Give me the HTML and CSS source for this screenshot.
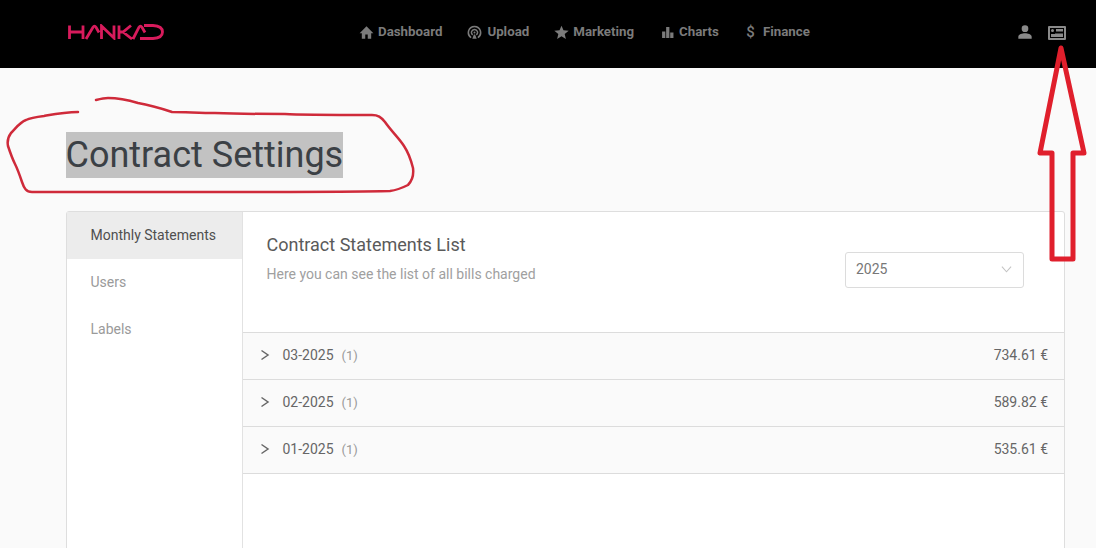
FILE: index.html
```html
<!DOCTYPE html>
<html lang="en">
<head>
<meta charset="utf-8">
<title>Contract Settings</title>
<link rel="stylesheet" href="styles.css">
</head>
<body>
<header class="topbar">
  <svg class="logo" viewBox="0 0 96 16" width="96" height="16" aria-label="HANKAD">
    <path d="M1.500 1.500V15M1.500 8H15M15 1.500V15M18 15 25 3.200Q26.500 1 28 3.200L31 8.500M33.500 15V2L46 14V1.500M51 1.500V15M51 8H55L63 1.500M55 8 64 15M65 15 71 3.200Q72.500 1 74 3.200L77 8.500M76 1.500H85Q94.500 2 94.500 8T85 14.500H72" />
  </svg>
  <nav class="nav">
    <a class="nav-item"><svg class="nav-icon" viewBox="0 0 24 24"><path d="M10 22v-7h4v7h5.500v-9H23L12 2 1 13h3.500v9z"/></svg>Dashboard</a>
    <a class="nav-item upload"><svg class="nav-icon" viewBox="0 0 24 24"><path d="M12 1a11 11 0 0 0-6 20.200l1.300-2.200a8.500 8.500 0 1 1 9.400 0l1.300 2.200A11 11 0 0 0 12 1zm0 5a6 6 0 0 0-3.500 10.900l1.300-2.200a3.500 3.500 0 1 1 4.400 0l1.300 2.200A6 6 0 0 0 12 6zm0 4.500a1.600 1.600 0 1 0 0 3.200 1.600 1.600 0 0 0 0-3.200zM11 15h2l2.500 7h-7z"/></svg>Upload</a>
    <a class="nav-item"><svg class="nav-icon" viewBox="0 0 24 24"><path d="m12 18 7 4.300-1.900-8L23.500 9l-8.300-.7L12 1 8.800 8.300.5 9l6.400 5.300-1.900 8z"/></svg>Marketing</a>
    <a class="nav-item charts"><svg class="nav-icon chart-icon" viewBox="0 0 24 24"><path d="M2 10h6v12H2zM9.500 2h6v20h-6zM17 12h6v10h-6z"/></svg>Charts</a>
    <a class="nav-item finance"><span class="dollar">$</span>Finance</a>
  </nav>
  <div class="top-actions">
    <svg class="action-icon" viewBox="0 0 24 24"><path d="M12 12a5 5 0 1 0 0-10 5 5 0 0 0 0 10zm0 2c-3.800 0-10 1.700-10 5v3h20v-3c0-3.300-6.200-5-10-5z"/></svg>
    <svg class="action-icon wide" viewBox="0 0 18 14"><path fill-rule="evenodd" d="M1 0h16a1 1 0 0 1 1 1v12a1 1 0 0 1-1 1H1a1 1 0 0 1-1-1V1a1 1 0 0 1 1-1zm1 2v10h14V2zm2.500 1a1.500 1.500 0 1 1 0 3 1.500 1.500 0 0 1 0-3zM3 11V8h4v-.5h8V11zm5-8h7v2.500H8z"/></svg>
  </div>
</header>

<main class="page">
  <h1 class="title"><span class="title-text">Contract Settings</span></h1>
  <section class="card">
    <aside class="side">
      <a class="side-item active">Monthly Statements</a>
      <a class="side-item">Users</a>
      <a class="side-item">Labels</a>
    </aside>
    <div class="content">
      <div class="content-head">
        <div>
          <h2 class="content-title">Contract Statements List</h2>
          <p class="content-sub">Here you can see the list of all bills charged</p>
        </div>
        <div class="select">
          <span>2025</span>
          <svg class="select-arrow" viewBox="0 0 12 8"><path d="M1 1.500 6 7l5-5.500"/></svg>
        </div>
      </div>
      <div class="rows">
        <div class="row">
          <svg class="chev" viewBox="0 0 10 12"><path d="M1.500 1.500 8 6l-6.500 4.500"/></svg>
          <span class="month">03-2025</span><span class="count">(1)</span><span class="amount">734.61 €</span>
        </div>
        <div class="row">
          <svg class="chev" viewBox="0 0 10 12"><path d="M1.500 1.500 8 6l-6.500 4.500"/></svg>
          <span class="month">02-2025</span><span class="count">(1)</span><span class="amount">589.82 €</span>
        </div>
        <div class="row">
          <svg class="chev" viewBox="0 0 10 12"><path d="M1.500 1.500 8 6l-6.500 4.500"/></svg>
          <span class="month">01-2025</span><span class="count">(1)</span><span class="amount">535.61 €</span>
        </div>
      </div>
    </div>
  </section>
</main>

<svg class="marks" viewBox="0 0 1096 548" width="1096" height="548">
  <path class="mark-thin" d="M78 112C65 112 55 114 44 116C36 117 30 118 26 120C20 122 16 128 11 133C8 137 7 141 8 146C10 152 12 158 15 164C18 170 20 176 22 182C24 188 26 192 32 192C60 192 120 192 200 192C280 192 350 192 390 191C398 190 402 188 408 185C412 181 414 176 413 168C411 160 408 152 404 146C399 138 392 132 385 122C381 117 378 115 372 115C340 115 300 115 285 114C265 114 240 114 215 113C200 113 185 112 172 112C160 108 150 105 138 103C128 100 118 98 108 98C104 98 100 99 96 100"/>
  <path class="mark-thick" d="M1061 48 1040 153H1052V259H1073V153H1084Z"/>
</svg>
</body>
</html>
```
FILE: styles.css
```css
* { box-sizing: border-box; }
html, body { margin: 0; padding: 0; }
body {
  position: relative;
  width: 1096px;
  height: 548px;
  overflow: hidden;
  background: #fafafa;
  font-family: Roboto, "Liberation Sans", sans-serif;
  color: #555;
}
.topbar {
  height: 68px;
  background: #000;
  display: flex;
  align-items: center;
  padding: 0 30px 4px 68px;
  position: relative;
}
.logo { fill: none; stroke: #d81b5c; stroke-width: 2.800; flex: none; }
.nav {
  position: absolute;
  left: 359px;
  top: 24px;
  display: flex;
  gap: 25px;
  align-items: center;
}
.nav-item {
  display: flex;
  align-items: center;
  gap: 4px;
  font-size: 13.300px;
  font-weight: 700;
  line-height: 16px;
  color: #7b7b7b;
  white-space: nowrap;
}
.upload { gap: 5px; }
.charts { margin-left: 2px; gap: 5px; }
.finance { margin-left: 2px; }
.nav-icon { width: 15px; height: 15px; fill: #7b7b7b; flex: none; }
.chart-icon { width: 13px; height: 13px; }
.dollar { width: 9px; font-size: 15px; font-weight: 500; margin-right: 4px; text-align: center; }
.top-actions { margin-left: auto; display: flex; align-items: center; gap: 15px; }
.action-icon { width: 16px; height: 16px; fill: #8a8a8a; }
.action-icon.wide { width: 18px; height: 14px; margin-top: 1px; }

.page { padding: 0 31px 0 65.500px; }
.title { margin: 0; padding-top: 64px; height: 143px; font-weight: 400; font-size: 36px; line-height: 46px; color: #3b4045; }
.title-text { display: inline-block; background: #c2c2c2; height: 46px; }

.card {
  display: flex;
  height: 400px;
  background: #fff;
  border: 1px solid #dedede;
  border-radius: 3px 3px 0 0;
}
.side {
  width: 176px;
  flex: none;
  border-right: 1px solid #e2e2e2;
  display: flex;
  flex-direction: column;
}
.side-item {
  height: 47px;
  padding: 0 24px 2px;
  display: flex;
  align-items: center;
  font-size: 14px;
  color: #9a9a9a;
}
.side-item.active { background: #ececec; color: #4f4f4f; }
.content { flex: 1; min-width: 0; }
.content-head {
  height: 120px;
  padding: 22px 40px 0 24px;
  display: flex;
  justify-content: space-between;
  align-items: flex-start;
}
.content-title { margin: 0; font-size: 18px; font-weight: 400; line-height: 21px; color: #5a5a5a; }
.content-sub { margin: 11px 0 0; font-size: 14px; line-height: 16px; color: #a0a0a0; }
.select {
  width: 179px;
  height: 36px;
  margin-top: 18px;
  padding: 0 11px 2px 10px;
  border: 1px solid #dcdcdc;
  border-radius: 3px;
  display: flex;
  align-items: center;
  justify-content: space-between;
  font-size: 14px;
  color: #777;
}
.select-arrow { width: 11px; height: 8px; fill: none; stroke: #c4c4c4; stroke-width: 1.200; }
.rows { border-top: 1px solid #dcdcdc; }
.row {
  height: 47px;
  padding: 0 16px 2px 17px;
  background: #fafafa;
  border-bottom: 1px solid #dcdcdc;
  display: flex;
  align-items: center;
  font-size: 14px;
  color: #666;
}
.chev { width: 10px; height: 12px; margin-right: 13px; fill: none; stroke: #666; stroke-width: 1.500; }
.count { margin-left: 8px; font-size: 13px; color: #999; }
.amount { margin-left: auto; }

.marks { position: absolute; left: 0; top: 0; pointer-events: none; }
.mark-thin { fill: none; stroke: #cf2a3a; stroke-width: 2.500; stroke-linejoin: round; stroke-linecap: round; }
.mark-thick { fill: none; stroke: #e01f2c; stroke-width: 5; stroke-linejoin: round; }
```
